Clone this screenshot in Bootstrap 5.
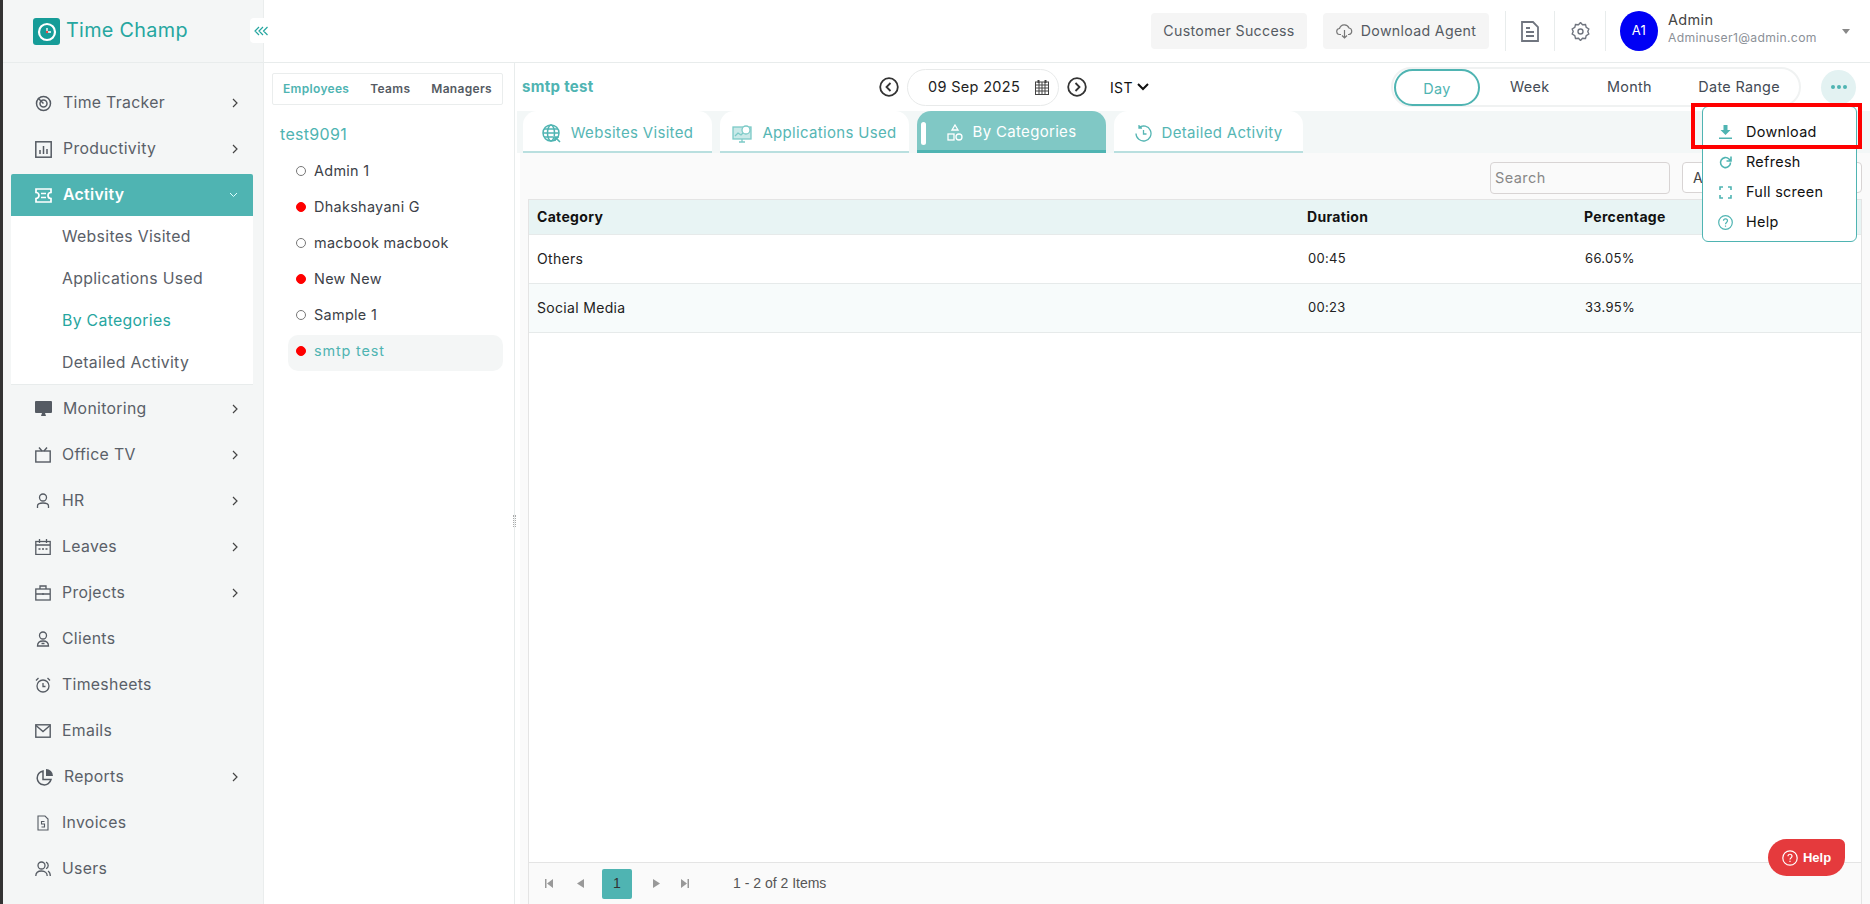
<!DOCTYPE html>
<html lang="en">
<head>
<meta charset="utf-8">
<title>Time Champ</title>
<link rel="stylesheet" href="https://cdn.jsdelivr.net/npm/bootstrap@5.3.0/dist/css/bootstrap.min.css">
<script src="https://cdn.jsdelivr.net/npm/bootstrap@5.3.0/dist/js/bootstrap.bundle.min.js"></script>
<style>
html,body{height:904px;overflow:hidden}
body{font-family:"Inter","Liberation Sans",sans-serif;background:#fff;color:#222;letter-spacing:.02em;position:relative}
svg{flex:none;display:block}
.tc-side{width:264px;flex:none;height:904px;background:#f4f6f6;border-left:3px solid #333;border-right:1px solid #eaeded}
.tc-brand{height:63px;border-bottom:1px solid #e8ecec;padding-left:30px;color:#26a6a0;font-size:19.8px;position:relative}
.tc-brand-txt{margin-left:6px}
.tc-collapse{position:absolute;left:247px;top:18px;width:22px;height:25px;background:#fff;border-radius:4px;z-index:3}
.tc-nav{padding:17px 10px 0 8px}
.tc-item{height:46px;padding-left:24px;padding-right:15px;color:#5a6068;font-size:15.8px;text-decoration:none}
.tc-item .tc-lbl{margin-left:11px;flex:1}
.tc-item.tc-on{height:42px;margin-top:2px;background:#4fb4b2;color:#fff;font-weight:600;border-radius:2px 2px 0 0}
.tc-sub{background:#fff;border-bottom:1px solid #e8ecec;margin-bottom:1px}
.tc-sub a{display:flex;align-items:center;height:42px;padding-left:51px;font-size:15.8px;color:#5a6068;text-decoration:none}
.tc-sub a.tc-cur{color:#26a6a0}
.tc-top{height:63px;border-bottom:1px solid #e8ecec;padding-right:20px}
.tc-tbtn{height:36px;background:#f5f5f5;border-radius:4px;color:#555b63;font-size:14.2px}
.tc-tsep{width:1px;height:40px;background:#e8ecec}
.tc-ava{width:38px;height:40px;border-radius:50%;background:#0000f5;color:#fff;font-size:13px;margin-left:14px}
.tc-ubox{width:174px;margin-left:10px;padding-bottom:7px}
.tc-uname{font-size:14.5px;line-height:19px;color:#444}
.tc-umail{font-size:12.2px;line-height:17px;color:#8b9097}
.tc-car{width:0;height:0;border-left:4px solid transparent;border-right:4px solid transparent;border-top:5px solid #888}
.tc-emp{width:251px;flex:none;height:841px;border-right:1px solid #e8ecec;padding:10px 11px 0 8px;position:relative}
.tc-grip{position:absolute;right:-2px;top:452px;width:3px;height:12px;border-left:1px dotted #aaa;border-right:1px dotted #aaa}
.tc-etabs{height:32px;border:1px solid #eaeded;border-radius:2px;font-size:12px;font-weight:600;color:#555b63;padding:0 10px}
.tc-etabs .tc-act{color:#4fb4b2}
.tc-grp{color:#4fb4b2;font-size:16px;margin:16px 0 0 8px;height:27px;line-height:27px}
.tc-emps{margin:7px 0 0 16px}
.tc-emp-row{height:36px;padding-left:8px;padding-bottom:4px;font-size:14.4px;color:#3c4148;gap:8px;border-radius:10px}
.tc-emp-row.tc-cur{background:#f4f6f6;color:#4fb4b2;letter-spacing:.06em}
.tc-dot{width:10px;height:10px;border-radius:50%;border:1px solid #777;flex:none}
.tc-dot.tc-red{background:#f00;border-color:#f00}
.tc-main{flex:1;min-width:0;height:841px}
.tc-hrow{height:48px;padding:0 13px 0 7px;position:relative}
.tc-who{color:#4fb4b2;font-weight:700;font-size:15px;width:357px;margin-top:1px}
.tc-pill{width:152px;height:37px;border:1px solid #e8eaea;border-radius:19px;font-size:14.5px;color:#222;margin:0 8px;padding:0 9px 0 20px}
.tc-ist{font-size:14px;color:#111;margin-left:23px;width:301px}
.tc-seg{width:410px;height:40px;border:2px solid #f0f2f2;border-radius:20px;font-size:14.4px;color:#444b55;margin-left:-20px}
.tc-seg span{text-align:center}
.tc-day{width:86px;height:37px;margin-left:1px;border:2px solid #4fb4b2;border-radius:19px;color:#4fb4b2;padding-top:3px}
.tc-more{width:35px;height:35px;border-radius:50%;background:#e3f2f2;margin-left:20px;gap:2px}
.tc-more i{width:4px;height:4px;background:#4fb4b2;border-radius:50%;display:block}
.tc-tabs{height:42px;background:#f3f7f7;padding-left:6px;margin-left:2px;gap:8px}
.tc-tab{height:42px;width:189px;padding-top:4px;background:#fff;border-radius:14px 14px 0 0;border-bottom:2px solid #b9dfdf;color:#56b6b4;font-size:15px;gap:10px;text-decoration:none;position:relative}
.tc-tab.tc-on{background:#80c8c5;color:#fff;border-bottom:3px solid #4fb4b2}
.tc-tab.tc-on::before{content:"";position:absolute;left:4px;top:11px;width:5px;height:23px;background:#fff;border-radius:3px}
.tc-body{height:751px;background:#fafafa;margin-left:5px;padding:0 8px}
.tc-tools{height:46px;gap:12px;padding-top:9px;padding-bottom:6px}
.tc-search{width:180px;height:32px;border:1px solid #d8d4d4;border-radius:4px;font-size:14.5px;padding:0 4px;color:#888;letter-spacing:.03em}
.tc-select{width:180px;height:31px;border:1px solid #d8d4d4;border-radius:4px;font-size:14px;padding:0 10px;color:#444;background:#fff}
.tc-grid{height:705px;border:1px solid #e4e4e4;border-bottom:0;background:#fff}
.tc-table{font-size:14px;margin:0;table-layout:fixed;width:100%}
.tc-table th,.tc-table td{padding:0 8px;vertical-align:middle;border-bottom:1px solid #e6eaea;color:#222;background:transparent;box-shadow:none}
.tc-table td.tc-val{padding-left:9px;font-size:13px}
.tc-table thead tr{height:34px;background:#e8f4f4}
.tc-table thead th{color:#111;font-weight:700}
.tc-table tbody tr{height:49px}
.tc-table tbody tr:nth-child(2){background:#f7fbfb}
.tc-pager{height:42px;background:#fafafa;border-top:1px solid #e4e4e4;font-family:"Liberation Sans",sans-serif;font-size:14px;color:#555;letter-spacing:0;padding-left:16px}
.tc-pnum{width:30px;height:30px;background:#4fb4b2;border-radius:2px;color:#333;margin-left:18px}
.tc-pgap1{margin-left:24px}
.tc-pgap2{margin-left:21px}
.tc-pinfo{margin-left:44px}
.tc-menu{position:absolute;left:1702px;top:106px;width:155px;height:136px;background:#fff;border:1px solid #4fb4b2;border-radius:6px;z-index:5;padding-top:10px}
.tc-menu a{display:flex;align-items:center;height:30px;padding-left:16px;gap:14px;color:#111;font-size:14.4px;text-decoration:none}
.tc-menu a.tc-mhelp{gap:13px;padding-left:15px}
.tc-mark{position:absolute;left:1691px;top:103px;width:171px;height:46px;border:4px solid #f00;z-index:6}
.tc-help{position:absolute;left:1768px;top:839px;width:77px;height:37px;background:#e53a3d;color:#fff;font-family:"Liberation Sans",sans-serif;font-weight:700;font-size:13px;letter-spacing:0;border-radius:20px 6px 20px 20px;z-index:6;gap:5px}
</style>
</head>
<body class="d-flex">
<aside class="tc-side">
  <div class="tc-brand d-flex align-items-center">
    <svg width="27" height="27" viewBox="0 0 27 27"><rect width="27" height="27" rx="3" fill="#169c98"/><circle cx="14" cy="14" r="8" fill="none" stroke="#fff" stroke-width="2.2"/><circle cx="14" cy="14" r="5.5" fill="#169c98"/><path d="M14 10v4h4" stroke="#fff" stroke-width="1.4" fill="none"/><circle cx="14" cy="14" r="1.2" fill="#e44"/></svg>
    <span class="tc-brand-txt">Time Champ</span>
    <div class="tc-collapse d-flex align-items-center justify-content-center"><svg width="15" height="10" viewBox="0 0 15 10" fill="none" stroke="#26a6a0" stroke-width="1.2"><path d="M5 1 1 5l4 4M9 1 5 5l4 4M13.500 1l-4 4 4 4"/></svg></div>
  </div>
  <nav class="tc-nav">
    <a class="tc-item d-flex align-items-center" href="#"><svg width="17" height="17" viewBox="0 0 17 17" fill="none" stroke="#555b63" stroke-width="1.500"><circle cx="8.500" cy="8.500" r="7"/><circle cx="8.500" cy="8.500" r="3.500"/><path d="M3 3l5.500 5.500"/></svg><span class="tc-lbl">Time Tracker</span><svg width="6" height="10" viewBox="0 0 6 10" fill="none" stroke="#444" stroke-width="1.200"><path d="m1 1 4 4-4 4"/></svg></a>
    <a class="tc-item d-flex align-items-center" href="#"><svg width="17" height="17" viewBox="0 0 17 17" fill="none" stroke="#555b63" stroke-width="1.500"><rect x=".8" y=".8" width="15.400" height="15.400"/><path d="M5 13V9M8.500 13V5M12 13V8"/></svg><span class="tc-lbl">Productivity</span><svg width="6" height="10" viewBox="0 0 6 10" fill="none" stroke="#444" stroke-width="1.200"><path d="m1 1 4 4-4 4"/></svg></a>
    <a class="tc-item tc-on d-flex align-items-center" href="#"><svg width="17" height="15" viewBox="0 0 17 15" fill="none" stroke="#fff" stroke-width="1.700"><path d="M1 1h15v3.500a3 3 0 0 0 0 6V14H1v-3.500a3 3 0 0 0 0-6z"/><path d="M6 5.500h5M6 9.500h5"/></svg><span class="tc-lbl">Activity</span><svg width="9" height="6" viewBox="0 0 9 6" fill="none" stroke="#dff" stroke-width="1"><path d="m1 1 3.500 3.500L8 1"/></svg></a>
    <div class="tc-sub">
      <a href="#">Websites Visited</a><a href="#">Applications Used</a><a class="tc-cur" href="#">By Categories</a><a href="#">Detailed Activity</a>
    </div>
    <a class="tc-item d-flex align-items-center" href="#"><svg width="17" height="16" viewBox="0 0 17 16" fill="#555b63"><path d="M1 0h15a1 1 0 0 1 1 1v10a1 1 0 0 1-1 1H1a1 1 0 0 1-1-1V1a1 1 0 0 1 1-1zM7 12h3l1 3H6z"/></svg><span class="tc-lbl">Monitoring</span><svg width="6" height="10" viewBox="0 0 6 10" fill="none" stroke="#444" stroke-width="1.200"><path d="m1 1 4 4-4 4"/></svg></a>
    <a class="tc-item d-flex align-items-center" href="#"><svg width="16" height="16" viewBox="0 0 16 16" fill="none" stroke="#555b63" stroke-width="1.400"><rect x=".8" y="4" width="14.400" height="11"/><path d="M4 .5 7 4M12 .5 9 4"/></svg><span class="tc-lbl">Office TV</span><svg width="6" height="10" viewBox="0 0 6 10" fill="none" stroke="#444" stroke-width="1.200"><path d="m1 1 4 4-4 4"/></svg></a>
    <a class="tc-item d-flex align-items-center" href="#"><svg width="16" height="16" viewBox="0 0 16 16" fill="none" stroke="#555b63" stroke-width="1.300"><circle cx="8" cy="4.500" r="3.500"/><path d="M2.500 15v-2c0-2 2-3 5.500-3s5.500 1 5.500 3v2"/></svg><span class="tc-lbl">HR</span><svg width="6" height="10" viewBox="0 0 6 10" fill="none" stroke="#444" stroke-width="1.200"><path d="m1 1 4 4-4 4"/></svg></a>
    <a class="tc-item d-flex align-items-center" href="#"><svg width="16" height="16" viewBox="0 0 16 16" fill="none" stroke="#555b63" stroke-width="1.300"><rect x=".8" y="2.500" width="14.400" height="13"/><path d="M1 6h14M4.500 0v4M11.500 0v4M3.500 10h2M7 10h2M10.500 10h2"/></svg><span class="tc-lbl">Leaves</span><svg width="6" height="10" viewBox="0 0 6 10" fill="none" stroke="#444" stroke-width="1.200"><path d="m1 1 4 4-4 4"/></svg></a>
    <a class="tc-item d-flex align-items-center" href="#"><svg width="16" height="16" viewBox="0 0 16 16" fill="none" stroke="#555b63" stroke-width="1.300"><rect x=".8" y="4" width="14.400" height="11"/><path d="M5 4V1h6v3M1 9h14M8 8v2"/></svg><span class="tc-lbl">Projects</span><svg width="6" height="10" viewBox="0 0 6 10" fill="none" stroke="#444" stroke-width="1.200"><path d="m1 1 4 4-4 4"/></svg></a>
    <a class="tc-item d-flex align-items-center" href="#"><svg width="16" height="16" viewBox="0 0 16 16" fill="none" stroke="#555b63" stroke-width="1.300"><circle cx="8" cy="4.500" r="3.500"/><path d="M2.500 15c0-3 2-5 5.500-5s5.500 2 5.500 5zM6.500 12.500h3"/></svg><span class="tc-lbl">Clients</span></a>
    <a class="tc-item d-flex align-items-center" href="#"><svg width="16" height="16" viewBox="0 0 16 16" fill="none" stroke="#555b63" stroke-width="1.300"><circle cx="8" cy="9" r="6"/><path d="M8 6v3.500h2.500M1 3.500 3.500 1M15 3.500 12.500 1"/></svg><span class="tc-lbl">Timesheets</span></a>
    <a class="tc-item d-flex align-items-center" href="#"><svg width="16" height="14" viewBox="0 0 16 14" fill="none" stroke="#555b63" stroke-width="1.400"><rect x=".8" y=".8" width="14.400" height="12.400"/><path d="m1 1.500 7 6 7-6"/></svg><span class="tc-lbl">Emails</span></a>
    <a class="tc-item d-flex align-items-center" href="#"><svg width="18" height="17" viewBox="0 0 18 17" fill="none" stroke="#555b63" stroke-width="1.500"><path d="M8 2a7 7 0 1 0 8 8.500H8z"/><path d="M11 0a7 7 0 0 1 7 7h-7z" fill="#555b63" stroke="none"/></svg><span class="tc-lbl">Reports</span><svg width="6" height="10" viewBox="0 0 6 10" fill="none" stroke="#444" stroke-width="1.200"><path d="m1 1 4 4-4 4"/></svg></a>
    <a class="tc-item d-flex align-items-center" href="#"><svg width="16" height="16" viewBox="0 0 16 16" fill="none" stroke="#555b63" stroke-width="1.100"><path d="M3 1h7l3 3v11H3zM9.500 6.500h-3v2.500h3v3h-3"/></svg><span class="tc-lbl">Invoices</span></a>
    <a class="tc-item d-flex align-items-center" href="#"><svg width="16" height="16" viewBox="0 0 16 16" fill="none" stroke="#555b63" stroke-width="1.300"><circle cx="6.500" cy="4.500" r="3.500"/><path d="M.8 15c0-3 2-5 5.700-5s5.700 2 5.700 5M11 1.200a3.500 3.500 0 0 1 0 6.500M13 10c1.500.8 2.300 2.500 2.300 5"/></svg><span class="tc-lbl">Users</span></a>
  </nav>
</aside>
<div class="flex-grow-1 d-flex flex-column" style="min-width:0">
  <header class="tc-top d-flex align-items-center justify-content-end">
    <div class="tc-tbtn d-flex align-items-center justify-content-center" style="width:156px">Customer Success</div>
    <div class="tc-tbtn d-flex align-items-center justify-content-center gap-2 ms-3" style="width:166px"><svg width="17" height="16" viewBox="0 0 17 16" fill="none" stroke="#777" stroke-width="1.200"><path d="M5 11.500H4a3 3 0 0 1-.5-6 5 5 0 0 1 9.500-.5 3.300 3.300 0 0 1 0 6.500h-1M8.500 7v8M6 12.500 8.500 15l2.500-2.500"/></svg>Download Agent</div>
    <div class="tc-tsep ms-3"></div>
    <div class="d-flex justify-content-center" style="width:48px"><svg width="18" height="21" viewBox="0 0 18 21" fill="none" stroke="#70757f" stroke-width="1.800"><path d="M1 1h11l5 5v14H1zM5 7h4M5 11h8M5 15h8"/></svg></div>
    <div class="tc-tsep"></div>
    <div class="d-flex justify-content-center" style="width:50px"><svg width="19" height="19" viewBox="0 0 19 19" fill="none" stroke="#70757f" stroke-width="1.400"><path d="m9.500 1 2 2.200 3-.2.700 2.800 2.600 1.700-1 2.500 1 2.500-2.600 1.700-.7 2.800-3-.2-2 2.200-2-2.200-3 .2-.7-2.800L1.200 12.500l1-2.500-1-2.500 2.600-1.700.7-2.800 3 .2z" transform="translate(0 -.5)"/><circle cx="9.500" cy="9.500" r="2.500"/></svg></div>
    <div class="tc-tsep"></div>
    <div class="tc-ava d-flex align-items-center justify-content-center">A1</div>
    <div class="tc-ubox">
      <div class="tc-uname">Admin</div>
      <div class="tc-umail">Adminuser1@admin.com</div>
    </div>
    <div class="tc-car"></div>
  </header>
  <div class="d-flex flex-grow-1">
    <section class="tc-emp">
      <div class="tc-etabs d-flex align-items-center justify-content-between"><span class="tc-act">Employees</span><span>Teams</span><span>Managers</span></div>
      <div class="tc-grp">test9091</div>
      <div class="tc-emps">
        <div class="tc-emp-row d-flex align-items-center"><span class="tc-dot"></span>Admin 1</div>
        <div class="tc-emp-row d-flex align-items-center"><span class="tc-dot tc-red"></span>Dhakshayani G</div>
        <div class="tc-emp-row d-flex align-items-center"><span class="tc-dot"></span>macbook macbook</div>
        <div class="tc-emp-row d-flex align-items-center"><span class="tc-dot tc-red"></span>New New</div>
        <div class="tc-emp-row d-flex align-items-center"><span class="tc-dot"></span>Sample 1</div>
        <div class="tc-emp-row tc-cur d-flex align-items-center"><span class="tc-dot tc-red"></span>smtp test</div>
      </div>
      <div class="tc-grip"></div>
    </section>
    <main class="tc-main">
      <div class="tc-hrow d-flex align-items-center">
        <div class="tc-who">smtp test</div>
        <svg width="20" height="20" viewBox="0 0 20 20" fill="none" stroke="#333" stroke-width="1.800"><circle cx="10" cy="10" r="8.800"/><path d="M11.500 6 7.500 10l4 4"/></svg>
        <div class="tc-pill d-flex align-items-center justify-content-between">09 Sep 2025<svg width="14" height="15" viewBox="0 0 14 15" fill="none" stroke="#444" stroke-width="1"><rect x=".5" y="2" width="13" height="12.500"/><path d="M1 5h12M1 8h12M1 11h12M4 2v12M7 2v12M10 2v12"/><path d="M3.500 0v3M10.500 0v3" stroke-width="2"/></svg></div>
        <svg width="20" height="20" viewBox="0 0 20 20" fill="none" stroke="#333" stroke-width="1.800"><circle cx="10" cy="10" r="8.800"/><path d="m8.500 6 4 4-4 4"/></svg>
        <div class="tc-ist d-flex align-items-center gap-1">IST <svg width="12" height="8" viewBox="0 0 12 8" fill="none" stroke="#111" stroke-width="2"><path d="m1 1 5 5 5-5"/></svg></div>
        <div class="tc-seg d-flex align-items-center">
          <span class="tc-day d-flex align-items-center justify-content-center">Day</span>
          <span style="width:100px">Week</span>
          <span style="width:100px">Month</span>
          <span style="width:120px">Date Range</span>
        </div>
        <div class="tc-more d-flex align-items-center justify-content-center"><i></i><i></i><i></i></div>
      </div>
      <div class="tc-tabs nav">
        <a class="tc-tab d-flex align-items-center justify-content-center" href="#"><svg width="19" height="19" viewBox="0 0 19 19" fill="none" stroke="#4fb4b2" stroke-width="1.500"><circle cx="9" cy="9" r="8"/><ellipse cx="9" cy="9" rx="3.500" ry="8"/><path d="M1 9h16M2 5h14M2 13h9"/><path d="m13 13 5 5M13 13h4M13 13v4" stroke-width="1.600"/></svg>Websites Visited</a>
        <a class="tc-tab d-flex align-items-center justify-content-center" href="#"><svg width="20" height="19" viewBox="0 0 20 19" fill="none" stroke="#7ccac7" stroke-width="1.300"><rect x="1" y="3" width="18" height="12" fill="#c9e9e8"/><path d="M7 18h6M10 15v3M3 12l3-3 3 2 3-3"/><circle cx="14" cy="6" r="4" fill="#fff"/></svg>Applications Used</a>
        <a class="tc-tab tc-on d-flex align-items-center justify-content-center" href="#"><svg width="16" height="17" viewBox="0 0 16 17" fill="none" stroke="#fff" stroke-width="1.300"><path d="m8 1 3 5H5z"/><rect x="1" y="10" width="6" height="6"/><circle cx="12" cy="13" r="3"/></svg>By Categories</a>
        <a class="tc-tab d-flex align-items-center justify-content-center" href="#"><svg width="17" height="17" viewBox="0 0 17 17" fill="none" stroke="#56b6b4" stroke-width="1.300"><path d="M4 2.500A7.500 7.500 0 1 1 1 8.500M4 0v3h3"/><path d="M8.500 5v4h3"/></svg>Detailed Activity</a>
      </div>
      <div class="tc-body">
        <div class="tc-tools d-flex justify-content-end">
          <div class="tc-search d-flex align-items-center">Search</div>
          <div class="tc-select d-flex align-items-center">All</div>
        </div>
        <div class="tc-grid d-flex flex-column">
          <div class="flex-grow-1">
            <table class="table tc-table">
              <colgroup><col style="width:770px"><col style="width:277px"><col></colgroup>
              <thead><tr><th>Category</th><th>Duration</th><th>Percentage</th></tr></thead>
              <tbody>
                <tr><td>Others</td><td class="tc-val">00:45</td><td class="tc-val">66.05%</td></tr>
                <tr><td>Social Media</td><td class="tc-val">00:23</td><td class="tc-val">33.95%</td></tr>
              </tbody>
            </table>
          </div>
          <div class="tc-pager d-flex align-items-center">
            <svg width="8" height="9" viewBox="0 0 8 9" fill="#999"><path d="M0 0h1.500v9H0zM8 0v9L2 4.500z"/></svg>
            <svg class="tc-pgap1" width="7" height="9" viewBox="0 0 7 9" fill="#999"><path d="M7 0v9L0 4.500z"/></svg>
            <div class="tc-pnum d-flex align-items-center justify-content-center">1</div>
            <svg class="tc-pgap2" width="7" height="9" viewBox="0 0 7 9" fill="#999"><path d="M0 0v9l7-4.500z"/></svg>
            <svg class="tc-pgap2" width="8" height="9" viewBox="0 0 8 9" fill="#999"><path d="M8 0H6.500v9H8zM0 0v9l6-4.500z"/></svg>
            <span class="tc-pinfo">1 - 2 of 2 Items</span>
          </div>
        </div>
      </div>
    </main>
  </div>
</div>
<div class="tc-menu">
  <a href="#"><svg width="13" height="14" viewBox="0 0 13 14" fill="#4fb4b2"><path d="M4.500 0h4v5h3l-5 5-5-5h3zM0 12.500h13V14H0z"/></svg>Download</a>
  <a href="#"><svg width="13" height="13" viewBox="0 0 13 13" fill="none" stroke="#4fb4b2" stroke-width="1.600"><path d="M11.500 6.500a5 5 0 1 1-1.500-3.500L12 5M12 .5V5H7.500"/></svg>Refresh</a>
  <a href="#"><svg width="13" height="13" viewBox="0 0 13 13" fill="none" stroke="#4fb4b2" stroke-width="1.600"><path d="M1 4V1h3M9 1h3v3M12 9v3H9M4 12H1V9"/></svg>Full screen</a>
  <a class="tc-mhelp" href="#"><svg width="15" height="15" viewBox="0 0 15 15" fill="none" stroke="#4fb4b2" stroke-width="1.200"><circle cx="7.500" cy="7.500" r="6.800"/><path d="M5.500 5.800c0-2.600 4-2.600 4 0 0 1.700-2 1.600-2 3.400M7.500 10.500v1.300"/></svg>Help</a>
</div>
<div class="tc-mark"></div>
<div class="tc-help d-flex align-items-center justify-content-center"><svg width="16" height="16" viewBox="0 0 16 16" fill="none" stroke="#fff" stroke-width="1.200"><circle cx="8" cy="8" r="7.200"/><path d="M6 6.200c0-2.600 4-2.600 4 0 0 1.700-2 1.600-2 3.400M8 10.800v1.300"/></svg>Help</div>
</body>
</html>
